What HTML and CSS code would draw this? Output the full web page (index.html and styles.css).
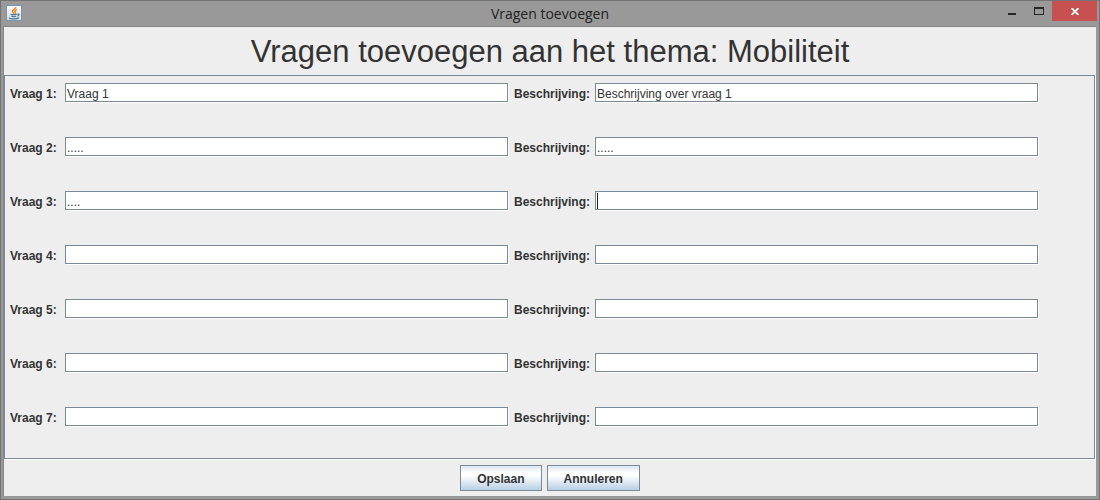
FILE: index.html
```
<!DOCTYPE html>
<html lang="nl">
<head>
<meta charset="utf-8">
<title>Vragen toevoegen</title>
<link rel="stylesheet" href="styles.css">
</head>
<body>
<div class="window">
  <header class="titlebar">
    <svg class="app-icon" width="16" height="16" viewBox="0 0 16 16" aria-hidden="true">
      <defs>
        <linearGradient id="tile" x1="0" y1="0" x2="0" y2="1">
          <stop offset="0" stop-color="#ffffff"/>
          <stop offset="1" stop-color="#d3dde4"/>
        </linearGradient>
      </defs>
      <rect x="0.5" y="0.5" width="15" height="15" fill="url(#tile)" stroke="#7896ab"/>
      <path d="M9.800 2C10.200 4 6 4.600 6.400 6.400C6.600 7.300 7.600 7.800 7.800 8.600M11 4.600C9.400 5.200 8.400 6 9.200 7C9.500 7.500 9.200 8 8.800 8.400" fill="none" stroke="#ee8426" stroke-width="1.500"/>
      <path d="M4.500 9.200C6 9.800 9 9.700 10.800 9.200M5.300 11.200C7 11.700 9 11.600 10.200 11.200M3 13C5 14.100 10.500 14.100 13 12.900M11.200 9.200C13.800 8.300 13.500 10.700 11.400 11.200" fill="none" stroke="#4c7797" stroke-width="1.200"/>
    </svg>
    <span class="window-title">Vragen toevoegen</span>
    <div class="window-controls">
      <button class="control minimize" type="button" aria-label="Minimaliseren">
        <svg width="8" height="2" viewBox="0 0 8 2"><path d="M0 0h8v2H0z" fill="#262626"/></svg>
      </button>
      <button class="control maximize" type="button" aria-label="Maximaliseren">
        <svg width="10" height="8" viewBox="0 0 10 8"><path fill-rule="evenodd" d="M0 0h10v8H0zM1 2v5h8V2z" fill="#262626"/></svg>
      </button>
      <button class="control close" type="button" aria-label="Sluiten">
        <svg width="8" height="7" viewBox="0 0 8 7"><path d="M0.500 0L7.500 7M7.500 0L0.500 7" stroke="#fff" stroke-width="1.800"/></svg>
      </button>
    </div>
  </header>
  <form class="content">
    <h1 class="heading">Vragen toevoegen aan het thema: Mobiliteit</h1>
    <div class="questions">
      <div class="question">
        <label for="q1">Vraag 1:</label><input class="field" id="q1" type="text" value="Vraag 1">
        <label class="second" for="d1">Beschrijving:</label><input class="field" id="d1" type="text" value="Beschrijving over vraag 1">
      </div>
      <div class="question">
        <label for="q2">Vraag 2:</label><input class="field" id="q2" type="text" value=".....">
        <label class="second" for="d2">Beschrijving:</label><input class="field" id="d2" type="text" value=".....">
      </div>
      <div class="question">
        <label for="q3">Vraag 3:</label><input class="field" id="q3" type="text" value="....">
        <label class="second" for="d3">Beschrijving:</label><input class="field active" id="d3" type="text">
      </div>
      <div class="question">
        <label for="q4">Vraag 4:</label><input class="field" id="q4" type="text">
        <label class="second" for="d4">Beschrijving:</label><input class="field" id="d4" type="text">
      </div>
      <div class="question">
        <label for="q5">Vraag 5:</label><input class="field" id="q5" type="text">
        <label class="second" for="d5">Beschrijving:</label><input class="field" id="d5" type="text">
      </div>
      <div class="question">
        <label for="q6">Vraag 6:</label><input class="field" id="q6" type="text">
        <label class="second" for="d6">Beschrijving:</label><input class="field" id="d6" type="text">
      </div>
      <div class="question">
        <label for="q7">Vraag 7:</label><input class="field" id="q7" type="text">
        <label class="second" for="d7">Beschrijving:</label><input class="field" id="d7" type="text">
      </div>
    </div>
    <div class="actions">
      <button class="button" type="button">Opslaan</button>
      <button class="button" type="button">Annuleren</button>
    </div>
  </form>
</div>
</body>
</html>
```
FILE: styles.css
```
* { box-sizing: border-box; }

body {
  margin: 0;
  font-family: "Liberation Sans", Arial, sans-serif;
  font-size: 12px;
  color: #333;
}

.window {
  display: flex;
  flex-direction: column;
  min-height: 100vh;
  padding: 0 2px 2px;
  border: 1px solid #737373;
  background: #999;
}

.titlebar {
  display: grid;
  grid-template-columns: 1fr auto 1fr;
  align-items: start;
  height: 25px;
}

.app-icon { margin: 4px 0 0 3px; }

.window-title {
  font-family: "Open Sans", "Noto Sans", sans-serif;
  font-size: 14px;
  line-height: 26px;
  color: #222;
}

.window-controls {
  display: flex;
  justify-content: flex-end;
}

.control {
  display: flex;
  justify-content: center;
  width: 27px;
  height: 20px;
  padding: 0;
  border: 0;
  background: none;
}

.minimize { padding-top: 12px; }
.maximize { padding-top: 6px; }

.close {
  width: 45px;
  padding-top: 7px;
  background: #c75050;
}

.content {
  display: flex;
  flex: 1;
  flex-direction: column;
  border: 1px solid #858585;
  border-width: 1px 0 0 1px;
  margin-right: 1px;
  margin-bottom: 1px;
  background: #eee;
}

.heading {
  margin: 0;
  height: 48px;
  font-size: 31px;
  font-weight: normal;
  line-height: 50px;
  text-align: center;
}

.questions {
  flex: 1;
  margin-right: 1px;
  padding: 7px 55px 0 5px;
  border: 1px solid #7a8a99;
  box-shadow: 1px 1px 0 #fff;
}

.question {
  display: grid;
  grid-template-columns: 55px 1fr 86px 1fr;
  align-items: start;
  height: 54px;
  font-weight: bold;
}

.question:last-child { height: 40px; }

.question label { line-height: 22px; }
.second { padding-left: 5px; }

.field {
  min-width: 0;
  height: 19px;
  margin: 0 1px 0 0;
  padding: 2px 1px 0;
  border: 1px solid #7a8a99;
  border-radius: 0;
  outline: 0;
  background: #fff;
  box-shadow: 1px 1px 0 #fff;
  color: #333;
  font: 12px "Liberation Sans", Arial, sans-serif;
}

.active {
  background: linear-gradient(#222, #222) 1px 1px / 1px 16px no-repeat #fff;
}

.actions {
  display: flex;
  justify-content: center;
  gap: 5px;
  padding: 6px 0 5px;
}

.button {
  height: 26px;
  padding: 2px 16px 0;
  border: 1px solid #7a8a99;
  border-radius: 0;
  background: linear-gradient(#dde8f3, #fff 30%, #fff 40%, #b8cfe5);
  color: #333;
  font: bold 12px "Liberation Sans", Arial, sans-serif;
}
```
